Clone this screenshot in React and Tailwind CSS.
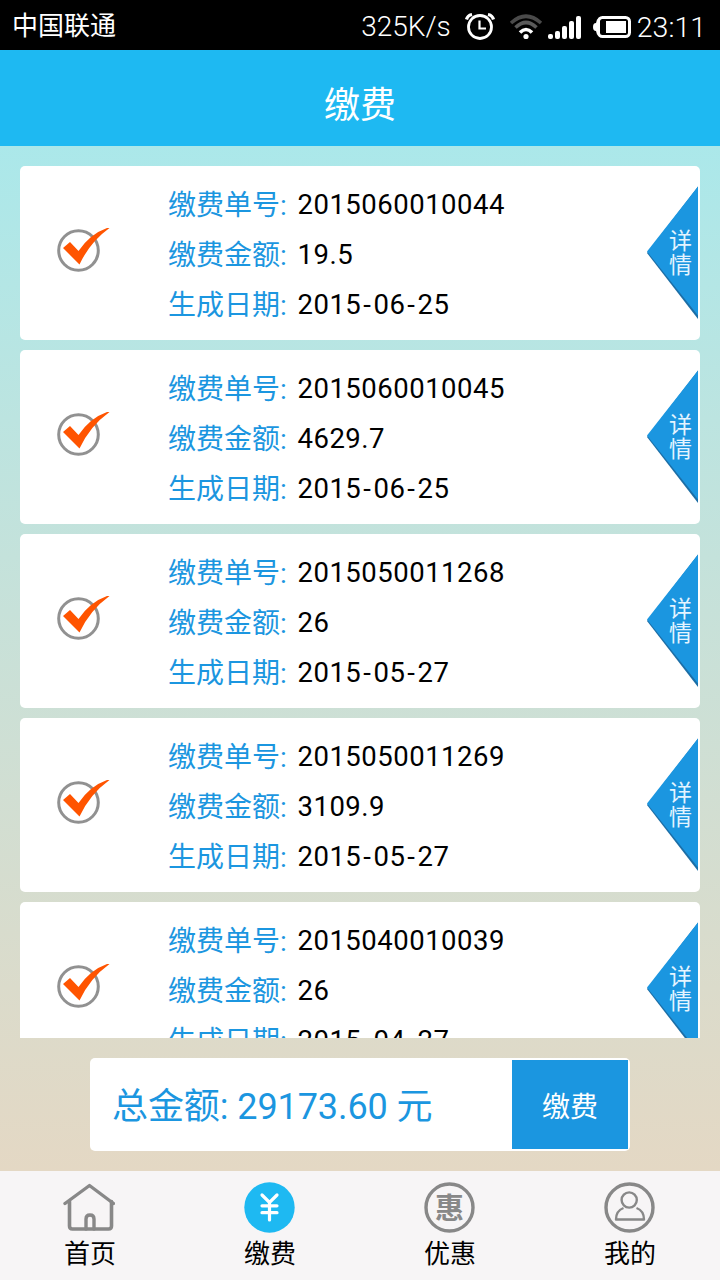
const BILLS = [
  { no: '2015060010044', amount: '19.5', date: '2015-06-25' },
  { no: '2015060010045', amount: '4629.7', date: '2015-06-25' },
  { no: '2015050011268', amount: '26', date: '2015-05-27' },
  { no: '2015050011269', amount: '3109.9', date: '2015-05-27' },
  { no: '2015040010039', amount: '26', date: '2015-04-27' },
]

const TABS = [
  { label: '首页', icon: HomeIcon },
  { label: '缴费', icon: PayIcon },
  { label: '优惠', icon: DealIcon },
  { label: '我的', icon: UserIcon },
]

function HomeIcon() {
  return (
    <svg className="w-[52px] h-[52px]" viewBox="0 0 52 52" fill="none" stroke="#888" strokeWidth="3.6" strokeLinecap="round" strokeLinejoin="round">
      <path d="M2 22.5 26.5 4.5 50.5 22.5" strokeWidth="3.4" />
      <path d="M6.5 20.5V45q0 3 3 3h36q3 0 3-3V20.5" />
      <path d="M23 48V38q0-4 4-4t4 4v10" strokeWidth="3.4" />
    </svg>
  )
}

function PayIcon() {
  return (
    <svg className="w-[52px] h-[52px]" viewBox="0 0 52 52" fill="none" stroke="#fff" strokeWidth="3.2" strokeLinecap="round">
      <circle cx="26.5" cy="26.5" r="25.2" fill="#1eb9f2" stroke="none" />
      <path d="M19 14l7.5 7.5 7.5-7.5M26.5 21.5v17.5M19 24.8h15M19 31.7h15" />
    </svg>
  )
}

function DealIcon() {
  return (
    <span className="relative block w-[52px] h-[52px]">
      <svg className="w-[52px] h-[52px]" viewBox="0 0 52 52" fill="none" stroke="#888" strokeWidth="3.4">
        <circle cx="26.5" cy="26.5" r="23.5" />
      </svg>
      <span className="absolute left-[12px] top-[13px] text-[29px] leading-[30px] font-bold text-[#888]">惠</span>
    </span>
  )
}

function UserIcon() {
  return (
    <svg className="w-[52px] h-[52px]" viewBox="0 0 52 52" fill="none" stroke="#888" strokeWidth="2.4" strokeLinejoin="round">
      <circle cx="26.5" cy="26.5" r="23.5" strokeWidth="3.4" />
      <circle cx="26.2" cy="19" r="7.6" />
      <path d="M20.5 27c-4 1.5-7.5 5.5-7.5 11.5h28c0-6-3.5-10-7.5-11.5" />
    </svg>
  )
}

function StatusBar() {
  return (
    <div className="h-[50px] shrink-0 bg-black text-white flex items-center pl-3 pr-3.5">
      <span className="text-[26px] leading-[50px] mt-0.5">中国联通</span>
      <div className="ml-auto flex items-center">
        <span className="text-[28px] leading-[50px] font-light mt-1">325K/s</span>
        <svg className="ml-[13px] mt-1 w-[32px] h-[28px]" viewBox="0 0 32 28" fill="none" stroke="#fff" strokeWidth="2.8">
          <circle cx="16" cy="14" r="11.5" />
          <path d="M15.5 7.5v8h6.5" strokeWidth="2.2" />
          <path d="M2.5 6.500q1-4 5.5-5M29.5 6.500q-1-4-5.5-5" strokeWidth="3.2" />
        </svg>
        <svg className="ml-[13px] mt-1 w-[34px] h-[26px]" viewBox="0 0 34 26" fill="none" strokeWidth="3.6">
          <path d="M2 9Q17-4.500 32 9" stroke="#4a4a4a" />
          <path d="M6.5 13.500Q17 3.500 27.5 13.500" stroke="#5a5a5a" />
          <path d="M11 18.500q6-6 12 0" stroke="#fff" />
          <circle cx="17" cy="22.5" r="2.6" fill="#fff" />
        </svg>
        <svg className="ml-[5px] mt-1 w-[34px] h-[24px]" viewBox="0 0 34 24" fill="#fff">
          <rect x="0" y="19" width="5" height="5" rx="2" />
          <rect x="7" y="16" width="5" height="8" rx="2" />
          <rect x="14" y="11" width="5" height="13" rx="2" />
          <rect x="21" y="6" width="5" height="18" rx="2" />
          <rect x="28" y="1" width="5" height="23" rx="2" />
        </svg>
        <svg className="ml-[10px] mt-1 w-[40px] h-[24px]" viewBox="0 0 40 24">
          <path d="M7 4.500H5L4 8Q1 8 1 12t3 4l1 3.500h2z" fill="#fff" />
          <rect x="6.5" y="2.5" width="31" height="19" rx="4" fill="none" stroke="#fff" strokeWidth="3" />
          <rect x="14" y="6" width="20" height="12" fill="#fff" />
        </svg>
        <span className="ml-[5px] text-[28.5px] leading-[50px] font-light mt-1.5">23:11</span>
      </div>
    </div>
  )
}

function CheckMark() {
  return (
    <svg className="ml-[36px] mb-2 w-[56px] h-[48px] shrink-0" viewBox="0 0 56 48">
      <circle cx="22.5" cy="25.5" r="19.8" fill="none" stroke="#919191" strokeWidth="3" />
      <path d="M7 23l7-6 8.5 9Q34 9 51 3L53.5 3Q34 17 23.500 39.500z" fill="#ff5400" />
    </svg>
  )
}

function DetailFlag() {
  return (
    <div className="relative ml-auto mr-0.5 w-[52px] h-[134px] shrink-0">
      <svg className="w-[52px] h-[134px]" viewBox="0 0 52 134">
        <path d="M52 0.500 1 67 52 133z" fill="#1c6ea6" />
        <path d="M52 0.500 1 65.500 52 129.500z" fill="#1b96e0" />
      </svg>
      <span className="absolute left-[23px] top-[44px] w-6 text-[23px] leading-[24px] text-[#e4f4ff]">详情</span>
    </div>
  )
}

function Row({ label, value }) {
  return (
    <div className="h-[50px] text-[28px] flex whitespace-pre">
      <span className="w-[129.5px] leading-[56px] text-[#1b96e0]">{label}:</span>
      <span className="text-black text-[27.5px] leading-[54px] tracking-[0.5px]">
        {value.split('-').map((part, i) => (
          <span key={i}>
            {i > 0 && <span className="mx-[2px]">-</span>}
            {part}
          </span>
        ))}
      </span>
    </div>
  )
}

function BillCard({ bill }) {
  return (
    <div className="h-[174px] shrink-0 rounded-[5px] bg-white flex items-center">
      <CheckMark />
      <div className="ml-[56px]">
        <Row label="缴费单号" value={bill.no} />
        <Row label="缴费金额" value={bill.amount} />
        <Row label="生成日期" value={bill.date} />
      </div>
      <DetailFlag />
    </div>
  )
}

export default function App() {
  return (
    <div className="w-[720px] h-[1280px] overflow-hidden flex flex-col font-[Roboto,'Noto_Sans_CJK_SC',sans-serif]">
      <StatusBar />
      <header className="h-[96px] shrink-0 bg-[#1eb9f2] text-white text-[36px] leading-[112px] text-center">缴费</header>

      <main className="flex-1 min-h-0 flex flex-col bg-linear-to-b from-[#abe8ea] to-[#e4d8c4]">
        <div className="mt-5 mx-5 h-[872px] overflow-hidden flex flex-col gap-2.5">
          {BILLS.map(b => (
            <BillCard key={b.no} bill={b} />
          ))}
        </div>

        {/* 合计 */}
        <div className="mt-5 mx-[90px] h-[93px] rounded-[5px] bg-white p-0.5 flex">
          <span className="flex-1 pl-[20px] text-[36px] leading-[95px] tracking-[-0.08px] text-[#1b96e0] whitespace-pre">总金额: 29173.60 元</span>
          <button className="w-[116px] pt-1.5 bg-[#1b96e0] text-white text-[28px]">缴费</button>
        </div>
      </main>

      <nav className="h-[109px] shrink-0 bg-[#f7f5f6] grid grid-cols-4">
        {TABS.map(({ label, icon: Icon }) => (
          <div key={label} className="flex flex-col items-center pt-2.5">
            <div className="-ml-0.5">
              <Icon />
            </div>
            <span className="text-[26px] leading-[42px] text-black">{label}</span>
          </div>
        ))}
      </nav>
    </div>
  )
}
